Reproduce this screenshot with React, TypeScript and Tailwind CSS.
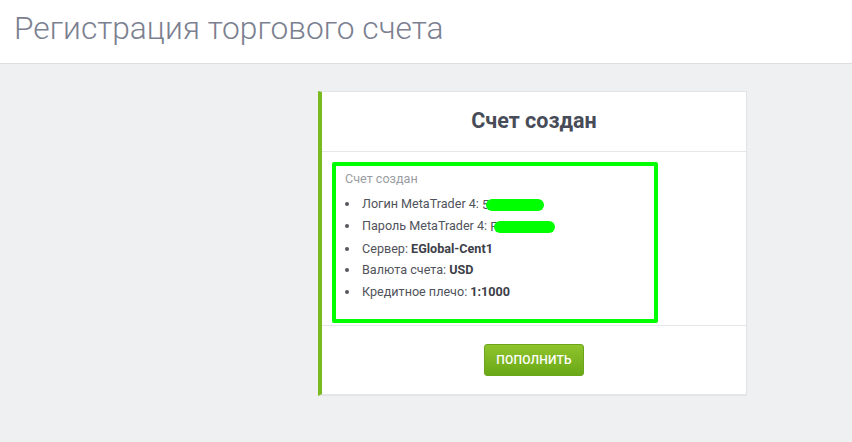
const items: { label: string; value?: string; hidden?: { first: string; width: number } }[] = [
	{ label: 'Логин MetaTrader 4: ', hidden: { first: '5', width: 58 } },
	{ label: 'Пароль MetaTrader 4: ', hidden: { first: 'F', width: 61 } },
	{ label: 'Сервер: ', value: 'EGlobal-Cent1' },
	{ label: 'Валюта счета: ', value: 'USD' },
	{ label: 'Кредитное плечо: ', value: '1:1000' },
];

export default function App() {
	return (
		<div className="min-h-[442px] bg-[#eff0f2] font-['Roboto',sans-serif]">
			<div className="h-[64px] bg-white border-b border-[#dcdde0] pl-[14px] pt-[8px]">
				<h1 className="text-[31.7px] font-light text-[#7b8090] leading-[42px]">
					Регистрация торгового счета
				</h1>
			</div>

			<div className="flex pt-[27px] pl-[318px]">
				<div className="w-[429px] bg-white border-t border-[#e3e4e7] border-r border-r-[#e3e4e7] border-b-2 border-b-[#e4e5e8] border-l-4 border-l-[#78bb1f]">
					<div className="h-[60px] flex items-center justify-center border-b border-[#e6e7ea]">
						<h2 className="text-[21.5px] font-bold text-[#474c58] leading-none pb-[2px]">Счет создан</h2>
					</div>

					<div className="pl-[10px] pt-[10px] pb-[2px] border-b border-[#e6e7ea]">
						<div className="w-[326px] h-[161px] border-4 border-[#00ff00] rounded-[2px] pl-[9px] pt-[3px]">
							<div className="text-[12.6px] text-[#9a9ca3] leading-[20px]">Счет создан</div>
							<ul className="mt-[4px] pl-[15px] list-disc text-[12.6px] text-[#50535b] leading-[21.5px] marker:text-[#55585f]">
								{items.map((item) => (
									<li key={item.label} className="pl-[2px]">
										{item.label}
										{item.value && <b className="font-bold text-[#3d4048]">{item.value}</b>}
										{item.hidden && (
											<span className="inline-flex items-center align-middle">
												<span>{item.hidden.first}</span>
												<span
													className="inline-block h-[12px] rounded-full bg-[#00ff00] -ml-[3px]"
													style={{ width: item.hidden.width }}
												></span>
											</span>
										)}
									</li>
								))}
							</ul>
						</div>
					</div>

					<div className="flex justify-center pt-[18px] pb-[18px]">
						<button className="w-[100px] h-[32px] rounded-[3px] border border-[#6aa51a] bg-gradient-to-b from-[#8fc42c] to-[#6aa817] text-white text-[12px] font-medium uppercase tracking-[0.2px]">
							пополнить
						</button>
					</div>
				</div>
			</div>
		</div>
	);
}
